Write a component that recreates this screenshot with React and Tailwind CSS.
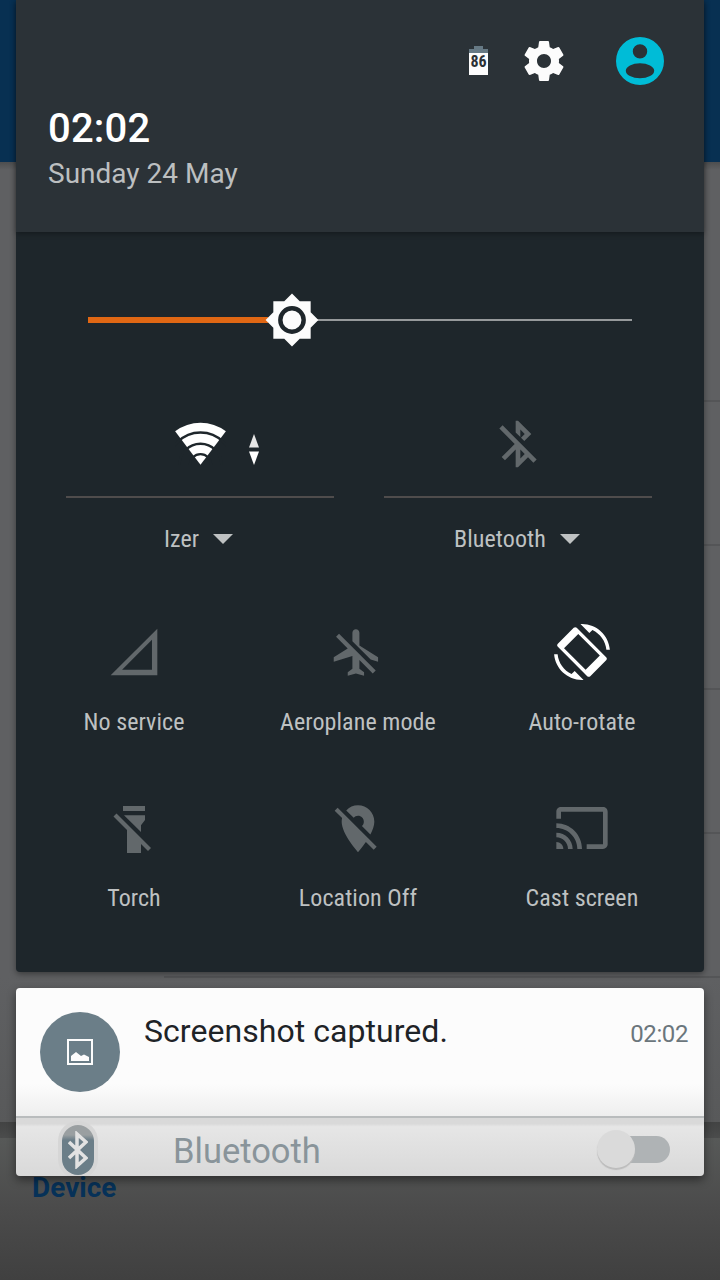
import clsx from 'clsx';

// All glyphs live on the 24px Material grid
function Glyph({ size = 'w-14 h-14', viewBox = '0 0 24 24', className, children }) {
  return (
    <svg viewBox={viewBox} fill="currentColor" className={clsx('block shrink-0', size, className)}>
      {children}
    </svg>
  );
}

const icons = {
  signal: <path fillRule="evenodd" d="M2 22h20V2zM6.9 19.6L19.7 6.8v12.8z" />,
  airplane: (
    <path
      transform="translate(-.4 .2)"
      d="M13 9V3.5c0-.83-.67-1.5-1.5-1.5S10 2.67 10 3.5v3.68l7.83 7.83L21 16v-2l-8-5zM3 5.27l4.99 4.99L2 14v2l8-2.5V19l-2 1.5V22l3.5-1 3.5 1v-1.5L13 19v-3.73L18.73 21 20 19.73 4.27 4 3 5.27z"
    />
  ),
  rotate: (
    <>
      <path d="M16.48 2.52c3.27 1.55 5.61 4.72 5.97 8.48h1.5C23.44 4.84 18.29 0 12 0l-.66.03 3.81 3.81 1.33-1.32zM7.52 21.48C4.25 19.94 1.91 16.76 1.55 13H.05C.56 19.16 5.71 24 12 24l.66-.03-3.81-3.81-1.33 1.32z" />
      <path
        fillRule="evenodd"
        d="M9.75 1.65c-.4-.4-.9-.4-1.3 0L1.65 8.45c-.4.4-.4.9 0 1.3l12.6 12.6c.4.4.9.4 1.3 0l6.8-6.8c.4-.4.4-.9 0-1.3zM10.4 4.3l9.25 9.25-6.1 6.1L4.3 10.4z"
      />
    </>
  ),
  torch: (
    <g transform="scale(.42857)">
      <path d="M17 6h22v5H17zM18 15.3h21V20l-4 5.2V32zM21 28.5l14 14V53H21z" />
      <path d="M9 15l34.5 34.5" stroke="currentColor" strokeWidth="4.2" />
    </g>
  ),
  location: (
    <path
      transform="translate(0 .3)"
      d="M12 6.5c1.38 0 2.5 1.12 2.5 2.5 0 .74-.33 1.39-.83 1.85l3.63 3.63c.98-1.86 1.7-3.8 1.7-5.48 0-3.87-3.13-7-7-7-1.98 0-3.76.83-5.04 2.15l3.19 3.19c.46-.52 1.11-.84 1.85-.84zm4.37 9.6l-4.63-4.63-.11-.11L3.27 3 2 4.27l3.18 3.18C5.07 7.95 5 8.47 5 9c0 5.25 7 13 7 13s1.67-1.85 3.38-4.35L18.73 21 20 19.73l-3.63-3.63z"
    />
  ),
  cast: (
    <path d="M21 3H3c-1.1 0-2 .9-2 2v3h2V5h18v14h-7v2h7c1.1 0 2-.9 2-2V5c0-1.1-.9-2-2-2zM1 18v3h3c0-1.66-1.34-3-3-3zm0-4v2c2.76 0 5 2.24 5 5h2c0-3.87-3.13-7-7-7zm0-4v2c4.97 0 9 4.03 9 9h2c0-6.08-4.93-11-11-11z" />
  ),
};

const tiles = [
  { icon: 'signal', label: 'No service' },
  { icon: 'airplane', label: 'Aeroplane mode' },
  { icon: 'rotate', label: 'Auto-rotate', on: true },
  { icon: 'torch', label: 'Torch' },
  { icon: 'location', label: 'Location Off' },
  { icon: 'cast', label: 'Cast screen' },
];

function Label({ children }) {
  return (
    <span className="font-['Roboto_Condensed','Roboto',sans-serif] [font-stretch:75%] text-2xl leading-7 tracking-[0.08px] text-[#bec1c2] whitespace-nowrap">
      {children}
    </span>
  );
}

function Caret() {
  return (
    <svg viewBox="0 0 20 10" className="w-5 h-2.5 shrink-0 fill-[#bec1c2]">
      <path d="M0 0h20L10 10z" />
    </svg>
  );
}

function Tile({ icon, label, on }) {
  return (
    <div className="flex flex-col items-center">
      <Glyph className={on ? 'text-white' : 'text-[#62686b]'}>{icons[icon]}</Glyph>
      <div className="mt-7 flex justify-center">
        <Label>{label}</Label>
      </div>
    </div>
  );
}

// Dimmed settings page behind the shade
function Backdrop() {
  return (
    <div className="absolute inset-0 flex flex-col bg-[#5f6062]">
      <div className="h-[162px] shrink-0 bg-[#083052]" />
      <div className="h-2 shrink-0 bg-linear-to-b from-[#4d4e4f] to-[#5f6062]" />
      <div className="ml-41 h-[232px] shrink-0 border-b-2 border-[#545557]" />
      <div className="ml-41 h-36 shrink-0 border-b-2 border-[#545557]" />
      <div className="ml-41 h-36 shrink-0 border-b-2 border-[#545557]" />
      <div className="ml-41 h-36 shrink-0 border-b-2 border-[#545557]" />
      <div className="ml-41 h-36 shrink-0 border-b-2 border-[#545557]" />
      <div className="h-36 shrink-0 bg-linear-to-b from-[#5f6062] to-[#58595a]" />
      <div className="h-4 shrink-0 bg-linear-to-b from-[#424343] to-[#4b4c4c]" />
      <div className="grow bg-linear-to-b from-[#575958] via-[#4b4b4b] to-[#404040] px-8 pt-[34px]">
        <span className="font-['Roboto',sans-serif] text-[28px] leading-8 font-bold text-[#063158]">Device</span>
      </div>
    </div>
  );
}

function Header() {
  return (
    <div className="relative h-58 bg-[#2b3237] px-8 shadow-[0_2px_5px_rgba(0,0,0,0.3)] font-['Roboto',sans-serif]">
      <div className="flex h-[105px] items-center justify-end pt-[17px] pr-2">
        <div className="flex flex-col items-center mr-8 -mt-px">
          <div className="h-[3px] w-[9px] bg-[#667984]" />
          <div className="h-[26px] w-[19px] border-t-[4px] border-[#667984] bg-[#fcfcfc] text-center text-base leading-[18px] font-bold text-[#2b3136] [font-stretch:75%]">
            86
          </div>
        </div>
        <Glyph size="w-12 h-12" className="mr-12 text-[#fcfcfc]">
          <path d="M19.43 12.98c.04-.32.07-.64.07-.98s-.03-.66-.07-.98l2.11-1.65c.19-.15.24-.42.12-.64l-2-3.46c-.12-.22-.39-.3-.61-.22l-2.49 1c-.52-.4-1.08-.73-1.69-.98l-.38-2.65C14.46 2.18 14.25 2 14 2h-4c-.25 0-.46.18-.49.42l-.38 2.65c-.61.25-1.17.59-1.69.98l-2.49-1c-.23-.09-.49 0-.61.22l-2 3.46c-.13.22-.07.49.12.64l2.11 1.65c-.04.32-.07.65-.07.98s.03.66.07.98l-2.11 1.65c-.19.15-.24.42-.12.64l2 3.46c.12.22.39.3.61.22l2.49-1c.52.4 1.08.73 1.69.98l.38 2.65c.03.24.24.42.49.42h4c.25 0 .46-.18.49-.42l.38-2.65c.61-.25 1.17-.59 1.69-.98l2.49 1c.23.09.49 0 .61-.22l2-3.46c.12-.22.07-.49-.12-.64l-2.11-1.65zM12 15.5c-1.93 0-3.5-1.57-3.5-3.5s1.57-3.5 3.5-3.5 3.5 1.57 3.5 3.5-1.57 3.5-3.5 3.5z" />
        </Glyph>
        {/* avatar: disc with the head and shoulders cut out */}
        <Glyph size="w-12 h-12" viewBox="0 0 48 48" className="text-[#00bcd7]">
          <path
            fillRule="evenodd"
            d="M24 0a24 24 0 1 0 0 48 24 24 0 1 0 0-48zM24 7.2a7.2 7.2 0 1 1 0 14.4 7.2 7.2 0 1 1 0-14.4zM24 26.200a14.200 7.500 0 1 1 0 15 14.200 7.500 0 1 1 0-15z"
          />
        </Glyph>
      </div>
      <div className="text-[40px] leading-[48px] font-medium tracking-[0.2px] text-white">02:02</div>
      <div className="mt-[3px] text-[28px] leading-9 text-[#bcbfc0]">Sunday 24 May</div>
    </div>
  );
}

function Brightness() {
  return (
    <div className="mt-[60px] ml-18 flex h-14 w-[544px] items-center">
      <div className="h-[6px] w-[180px] bg-[#e06714]" />
      <svg viewBox="0 0 24 24" className="-mx-1 h-14 w-14 shrink-0 relative">
        <path
          fill="#fcfcfc"
          d="M20 8.69V4h-4.69L12 .69 8.69 4H4v4.69L.69 12 4 15.31V20h4.69L12 23.31 15.31 20H20v-4.69L23.31 12 20 8.69z"
        />
        <circle cx="12" cy="12" r="5" fill="none" stroke="#1e262b" strokeWidth="1.9" />
      </svg>
      <div className="h-0.5 grow bg-[#96999b]" />
    </div>
  );
}

function Connections() {
  return (
    <div className="mt-14 ml-[50px] flex gap-[50px]">
      <div className="w-[268px]">
        <div className="flex h-[94px] items-start border-b-2 border-[#4f4c4c] pt-[18px] pl-[109px]">
          <svg viewBox="0 0 51 43" className="h-[43px] w-[51px]">
            <path d="M25.5 42.7L.1 9.2a42.5 42.5 0 0 1 50.8 0z" fill="#fff" />
            <g fill="none" stroke="#1e262b">
              <circle cx="25.5" cy="42.7" r="32.2" strokeWidth="2.4" />
              <circle cx="25.5" cy="42.7" r="21" strokeWidth="2.6" />
              <circle cx="25.5" cy="42.7" r="10.6" strokeWidth="2.2" />
            </g>
          </svg>
          <svg viewBox="0 0 10 31" className="mt-3 ml-[23px] h-[31px] w-2.5">
            <path d="M5 0l5 13.5H0z" fill="#e6e6e6" />
            <path d="M0 17.5h10L5 31z" fill="#fff" />
          </svg>
        </div>
        <div className="mt-[27px] flex items-center justify-center gap-3.5 pr-[3px]">
          <Label>Izer</Label>
          <Caret />
        </div>
      </div>
      <div className="w-[268px]">
        <div className="flex h-[94px] justify-center border-b-2 border-[#4f4c4c] pt-3">
          <Glyph className="text-[#62686b]">
            <path d="M13 5.83l1.88 1.88-1.6 1.6 1.41 1.41 3.02-3.02L12 2h-1v5.03l2 2v-3.2zM5.41 4L4 5.41 10.59 12 5 17.59 6.41 19 11 14.41V22h1l4.29-4.29 2.3 2.29L20 18.59 5.41 4zM13 18.17v-3.76l1.88 1.88L13 18.17z" />
          </Glyph>
        </div>
        <div className="mt-[27px] flex items-center justify-center gap-3.5 pr-0.5">
          <Label>Bluetooth</Label>
          <Caret />
        </div>
      </div>
    </div>
  );
}

function Notifications() {
  return (
    <div className="relative mt-4 h-47 overflow-hidden rounded shadow-[0_4px_10px_rgba(0,0,0,0.45)] font-['Roboto',sans-serif]">
      <div className="flex h-32 items-start bg-linear-to-b from-[#fcfcfc] from-75% to-[#eeeeee] px-6 pr-4 pt-6">
        <div className="flex size-20 items-center justify-center rounded-full bg-[#6b7e88]">
          <svg viewBox="0 0 26 26" className="size-[26px]">
            <path d="M1 1h24v24H1z" fill="none" stroke="#fcfcfc" strokeWidth="2" />
            <path d="M4 22v-5l5-4 5 4 3-1.500 5 2.500v4z" fill="#fcfcfc" />
          </svg>
        </div>
        <div className="ml-6 grow text-[32px] leading-[38px] tracking-[0.05px] text-[#1e2327]">Screenshot captured.</div>
        <div className="mt-2 text-2xl leading-7 tracking-[-0.4px] text-[#6b767c]">02:02</div>
      </div>
      <div className="flex h-15 items-center border-t-2 border-[#b9bcbd] bg-linear-to-b from-[#d9d9d9] from-10% via-[#e6e6e6] via-15% to-[#d9d9d9] pl-[46px] pr-[34px]">
        <div className="mt-1.5 flex h-[50px] w-8 shrink-0 items-center justify-center rounded-full bg-linear-to-b from-[#9a9fa1] from-20% to-[#6b7e88] to-30% ring-4 ring-[#d6d6d6]">
          <svg viewBox="0 0 20 38" className="h-[38px] w-5 fill-none stroke-[#e2e2e2] stroke-[3.5]">
            <path d="M1 11l17 16-9 8V3l9 8L1 27" />
          </svg>
        </div>
        <div className="mt-2 ml-[79px] grow text-[34.5px] leading-10 text-[#89949a]">Bluetooth</div>
        <div className="relative mt-1 flex h-[38px] w-[73px] items-center justify-end">
          <div className="h-[27px] w-[54px] rounded-full bg-[#afb3b5]" />
          <div className="absolute left-0 top-0 size-[38px] rounded-full bg-[#dadada] shadow-[0_2px_1px_#bcbcbc]" />
        </div>
      </div>
    </div>
  );
}

export default function App() {
  return (
    <div className="relative h-[1280px] w-[720px] overflow-hidden">
      <Backdrop />
      <div className="relative px-4">
        <div className="h-[972px] rounded-b bg-[#1e262b] shadow-[0_2px_6px_rgba(0,0,0,0.4)]">
          <Header />
          <Brightness />
          <Connections />
          <div className="ml-1.5 mr-2.5 mt-[71px] grid grid-cols-3 gap-y-16">
            {tiles.map((tile) => (
              <Tile key={tile.label} {...tile} />
            ))}
          </div>
        </div>
        <Notifications />
      </div>
    </div>
  );
}
